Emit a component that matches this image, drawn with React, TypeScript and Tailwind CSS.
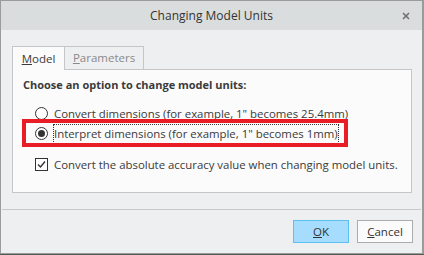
import { X } from 'lucide-react';

const font = { fontFamily: '"Open Sans", "Noto Sans", sans-serif' };

function Radio({ checked }: { checked?: boolean }) {
  return (
    <span className="flex h-[13px] w-[13px] shrink-0 items-center justify-center rounded-full border border-[#333333] bg-white">
      {checked && <span className="h-[7px] w-[7px] rounded-full bg-[#333333]" />}
    </span>
  );
}

function Checkbox({ checked }: { checked?: boolean }) {
  return (
    <span className="flex h-[13px] w-[13px] shrink-0 items-center justify-center border border-[#333333] bg-white">
      {checked && (
        <svg width="9" height="9" viewBox="0 0 9 9">
          <path d="M1 4.5 L3.5 7 L8 1.5" fill="none" stroke="#333" strokeWidth="1.4" />
        </svg>
      )}
    </span>
  );
}

export default function App() {
  return (
    <div className="h-[255px] w-[424px] bg-[#4f5c55] text-[11px] text-[#3a3a3a]" style={font}>
      <div className="flex h-[254px] flex-col border border-r-2 border-[#9b9b9b] bg-[#eeeff1]">
        {/* Title bar */}
        <div className="relative flex h-[29px] shrink-0 items-center justify-center bg-[#dadddd] text-[12px] text-[#333333]">
          Changing Model Units
          <X className="absolute right-[11px] top-[10px] h-[10px] w-[10px] text-[#707070]" strokeWidth={4} />
        </div>

        {/* Tabs */}
        <div className="ml-[11px] mt-[16px] flex h-[23px] text-[11.5px]">
          <div className="relative z-10 flex h-[24px] w-[53px] items-center justify-center border border-b-0 border-[#c6c6c6] bg-[#fbfbfb]">
            <span><span className="underline">M</span>odel</span>
          </div>
          <div className="flex h-[23px] w-[79px] items-center justify-center border border-b-0 border-l-0 border-[#c6c6c6] bg-[#eeeff1] text-[#8a8a8a]">
            <span><span className="underline">P</span>arameters</span>
          </div>
        </div>

        {/* Panel */}
        <div className="relative ml-[11px] h-[124px] w-[400px] border border-[#c6c6c6] bg-[#fbfbfb] pl-[10px] pt-[7px]">
          <div className="font-bold">Choose an option to change model units:</div>
          <div className="ml-[12px] mt-[12px] flex flex-col gap-[4px] text-[11.4px]">
            <div className="flex h-[16px] items-center gap-[6px]">
              <Radio />
              <span>Convert dimensions (for example, 1" becomes 25.4mm)</span>
            </div>
            <div className="flex h-[16px] items-center gap-[5px]">
              <Radio checked />
              <span className="border border-dotted border-[#333333] leading-[18px]">
                Interpret dimensions (for example, 1" becomes 1mm)
              </span>
            </div>
          </div>
          <div className="ml-[12px] mt-[15px] flex h-[16px] items-center gap-[6px] text-[11.4px]">
            <Checkbox checked />
            <span>Convert the absolute accuracy value when changing model units.</span>
          </div>
          {/* annotation box */}
          <div className="absolute left-[9px] top-[49px] h-[28px] w-[326px] border-4 border-[#e81d25]" />
        </div>

        {/* Separator */}
        <div className="ml-[1px] mr-[1px] mt-[16px] h-px bg-[#c8c8c8]" />

        {/* Buttons */}
        <div className="mr-[9px] mt-[10px] flex justify-end gap-[8px] text-[11.5px]">
          <button className="h-[23px] w-[56px] border border-[#5cbff0] bg-[#a6dcfd] text-[#333333]">
            <span className="underline">O</span>K
          </button>
          <button className="h-[23px] w-[56px] border border-[#acacac] bg-[#fbfbfb] text-[#333333]">
            <span className="underline">C</span>ancel
          </button>
        </div>
      </div>
    </div>
  );
}
